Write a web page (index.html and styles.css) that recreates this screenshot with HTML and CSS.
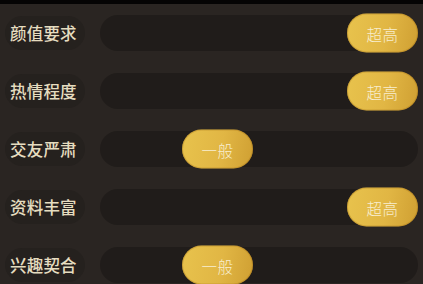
FILE: index.html
```html
<!DOCTYPE html>
<html lang="zh">
<head>
<meta charset="utf-8">
<link rel="stylesheet" href="styles.css">
</head>
<body>
<div class="topbar"></div>
<div class="list">
  <div class="row">
    <div class="label">颜值要求</div>
    <div class="track"><div class="thumb" style="left: 247px">超高</div></div>
  </div>
  <div class="row">
    <div class="label">热情程度</div>
    <div class="track"><div class="thumb" style="left: 247px">超高</div></div>
  </div>
  <div class="row">
    <div class="label">交友严肃</div>
    <div class="track"><div class="thumb" style="left: 82px">一般</div></div>
  </div>
  <div class="row">
    <div class="label">资料丰富</div>
    <div class="track"><div class="thumb" style="left: 247px">超高</div></div>
  </div>
  <div class="row">
    <div class="label">兴趣契合</div>
    <div class="track"><div class="thumb" style="left: 82px">一般</div></div>
  </div>
</div>
</body>
</html>
```
FILE: styles.css
```css
html, body {
  margin: 0;
  padding: 0;
  background: #2a2522;
  width: 423px;
  height: 284px;
  overflow: hidden;
  font-family: "Noto Sans CJK SC", "Noto Sans", sans-serif;
}
.topbar {
  height: 4px;
  background: #050404;
}
.list {
  display: flex;
  flex-direction: column;
}
.row {
  height: 58px;
  display: flex;
  align-items: center;
  padding-left: 5px;
  padding-right: 5px;
}
.label {
  width: 80px;
  height: 34px;
  box-sizing: border-box;
  padding-left: 5px;
  display: flex;
  align-items: center;
  background: #25211e;
  border-radius: 17px;
  color: #e6ddc0;
  font-size: 16.5px;
  font-weight: 500;
  letter-spacing: 0.2px;
  margin-right: 15px;
}
.track {
  flex: 1;
  height: 36px;
  background: #201c1a;
  border-radius: 18px;
  position: relative;
}
.thumb {
  position: absolute;
  top: 50%;
  transform: translateY(-50%);
  width: 71px;
  height: 39px;
  border-radius: 20px;
  background: linear-gradient(100deg, #e8c34d 0%, #e1b644 55%, #cf9f32 100%);
  box-shadow: inset 0 0 0 1px rgba(160, 110, 20, 0.35);
  color: #f8eed0;
  font-size: 15.5px;
  font-weight: 300;
  display: flex;
  align-items: center;
  justify-content: center;
  letter-spacing: 0.5px;
}
```
